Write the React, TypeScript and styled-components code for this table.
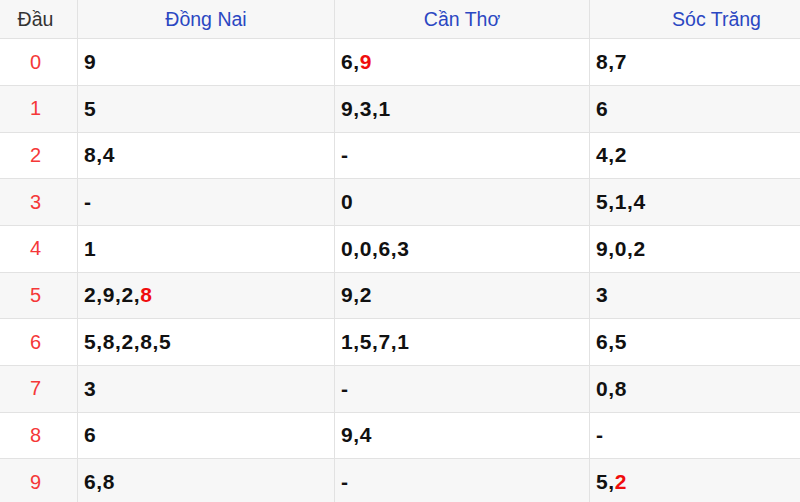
import styled, { createGlobalStyle } from "styled-components";

const GlobalStyle = createGlobalStyle`
    html, body {
        margin: 0;
        padding: 0;
        background: #ffffff;
    }
    body {
        font-family: "Liberation Sans", Arial, sans-serif;
    }
`;

type Part = { text: string; red?: boolean };

const provinces = ["Đồng Nai", "Cần Thơ", "Sóc Trăng"];
const columnWidths = [84, 257, 255, 254];

// digits marked with "!" are the highlighted (red) ones
const rows: string[][] = [
    ["9", "6,!9", "8,7"],
    ["5", "9,3,1", "6"],
    ["8,4", "-", "4,2"],
    ["-", "0", "5,1,4"],
    ["1", "0,0,6,3", "9,0,2"],
    ["2,9,2,!8", "9,2", "3"],
    ["5,8,2,8,5", "1,5,7,1", "6,5"],
    ["3", "-", "0,8"],
    ["6", "9,4", "-"],
    ["6,8", "-", "5,!2"],
];

const parse = (value: string): Part[] =>
    value.split(",").map((part) =>
        part.startsWith("!") ? { text: part.slice(1), red: true } : { text: part }
    );

export default function App() {
    return (
        <Frame>
            <GlobalStyle />
            <Table>
                <colgroup>
                    {columnWidths.map((width, i) => (
                        <Col key={i} $width={width} />
                    ))}
                </colgroup>
                <thead>
                    <tr>
                        <HeadCell $dark>Đầu</HeadCell>
                        {provinces.map((name) => (
                            <HeadCell key={name}>{name}</HeadCell>
                        ))}
                    </tr>
                </thead>
                <tbody>
                    {rows.map((row, index) => (
                        <Row key={index} $striped={index % 2 === 1}>
                            <IndexCell>{index}</IndexCell>
                            {row.map((value, col) => (
                                <ValueCell key={col}>
                                    {parse(value).map((part, i) => (
                                        <span key={i}>
                                            {i > 0 && ","}
                                            {part.red ? <Red>{part.text}</Red> : part.text}
                                        </span>
                                    ))}
                                </ValueCell>
                            ))}
                        </Row>
                    ))}
                </tbody>
            </Table>
        </Frame>
    );
}

const Frame = styled.div`
    width: 800px;
    height: 502px;
    overflow: hidden;
`;

const Table = styled.table`
    border-collapse: collapse;
    table-layout: fixed;
    width: 850px;
    margin-left: -7px;
    margin-top: -1px;
`;

const Col = styled.col<{ $width: number }>`
    width: ${({ $width }) => $width}px;
`;

const HeadCell = styled.th<{ $dark?: boolean }>`
    height: 39.3px;
    padding: 0;
    box-sizing: border-box;
    background: #f7f7f7;
    border: 1px solid #e2e2e2;
    font-size: 19.5px;
    font-weight: 400;
    text-align: center;
    vertical-align: middle;
    color: ${({ $dark }) => ($dark ? "#333333" : "#2b47c2")};
`;

const Row = styled.tr<{ $striped: boolean }>`
    height: 46.67px;
    background: ${({ $striped }) => ($striped ? "#f7f7f7" : "#ffffff")};
`;

const IndexCell = styled.td`
    padding: 0;
    border: 1px solid #e2e2e2;
    text-align: center;
    font-size: 20px;
    color: #f53838;
`;

const ValueCell = styled.td`
    padding: 0 0 0 6px;
    border: 1px solid #e2e2e2;
    font-size: 21px;
    font-weight: 700;
    letter-spacing: 0.6px;
    color: #111111;
`;

const Red = styled.span`
    color: #f00d0d;
`;
